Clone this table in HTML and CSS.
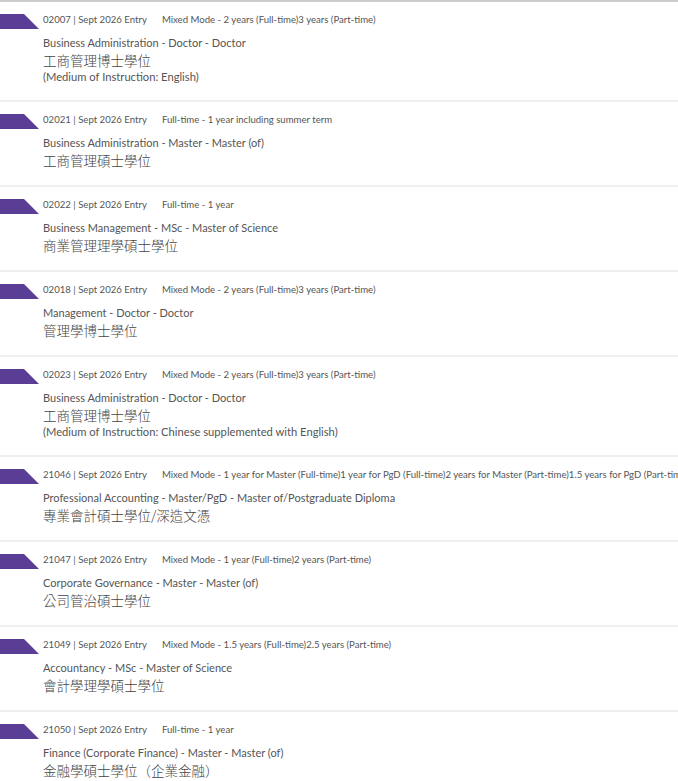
FILE: index.html
```html
<!DOCTYPE html>
<html lang="en">
<head>
  <meta charset="UTF-8" />
  <title>Programmes – Sept 2026 Entry</title>
  <link rel="stylesheet" href="styles.css">
</head>
<body>
  <ul class="programmes">
    <li class="programme">
      <div class="meta"><span class="tab"></span><span class="code">02007 | Sept 2026 Entry</span><span class="mode">Mixed Mode - 2 years (Full-time)3 years (Part-time)</span></div>
      <div class="name-en">Business Administration - Doctor - Doctor</div>
      <div class="name-zh">工商管理博士學位</div>
      <div class="note">(Medium of Instruction: English)</div>
    </li>
    <li class="programme">
      <div class="meta"><span class="tab"></span><span class="code">02021 | Sept 2026 Entry</span><span class="mode">Full-time - 1 year including summer term</span></div>
      <div class="name-en">Business Administration - Master - Master (of)</div>
      <div class="name-zh">工商管理碩士學位</div>
    </li>
    <li class="programme">
      <div class="meta"><span class="tab"></span><span class="code">02022 | Sept 2026 Entry</span><span class="mode">Full-time - 1 year</span></div>
      <div class="name-en">Business Management - MSc - Master of Science</div>
      <div class="name-zh">商業管理理學碩士學位</div>
    </li>
    <li class="programme">
      <div class="meta"><span class="tab"></span><span class="code">02018 | Sept 2026 Entry</span><span class="mode">Mixed Mode - 2 years (Full-time)3 years (Part-time)</span></div>
      <div class="name-en">Management - Doctor - Doctor</div>
      <div class="name-zh">管理學博士學位</div>
    </li>
    <li class="programme">
      <div class="meta"><span class="tab"></span><span class="code">02023 | Sept 2026 Entry</span><span class="mode">Mixed Mode - 2 years (Full-time)3 years (Part-time)</span></div>
      <div class="name-en">Business Administration - Doctor - Doctor</div>
      <div class="name-zh">工商管理博士學位</div>
      <div class="note">(Medium of Instruction: Chinese supplemented with English)</div>
    </li>
    <li class="programme">
      <div class="meta"><span class="tab"></span><span class="code">21046 | Sept 2026 Entry</span><span class="mode">Mixed Mode - 1 year for Master (Full-time)1 year for PgD (Full-time)2 years for Master (Part-time)1.5 years for PgD (Part-time)</span></div>
      <div class="name-en">Professional Accounting - Master/PgD - Master of/Postgraduate Diploma</div>
      <div class="name-zh">專業會計碩士學位/深造文憑</div>
    </li>
    <li class="programme">
      <div class="meta"><span class="tab"></span><span class="code">21047 | Sept 2026 Entry</span><span class="mode">Mixed Mode - 1 year (Full-time)2 years (Part-time)</span></div>
      <div class="name-en">Corporate Governance - Master - Master (of)</div>
      <div class="name-zh">公司管治碩士學位</div>
    </li>
    <li class="programme">
      <div class="meta"><span class="tab"></span><span class="code">21049 | Sept 2026 Entry</span><span class="mode">Mixed Mode - 1.5 years (Full-time)2.5 years (Part-time)</span></div>
      <div class="name-en">Accountancy - MSc - Master of Science</div>
      <div class="name-zh">會計學理學碩士學位</div>
    </li>
    <li class="programme">
      <div class="meta"><span class="tab"></span><span class="code">21050 | Sept 2026 Entry</span><span class="mode">Full-time - 1 year</span></div>
      <div class="name-en">Finance (Corporate Finance) - Master - Master (of)</div>
      <div class="name-zh">金融學碩士學位（企業金融）</div>
    </li>
  </ul>
</body>
</html>
```

FILE: styles.css
```css
html, body {
  margin: 0;
  padding: 0;
  overflow: hidden;
}
body {
  font-family: Lato, "Noto Sans CJK TC", sans-serif;
  background: #fff;
  color: #555;
}
.programmes {
  list-style: none;
  margin: 0;
  padding: 0;
  border-top: 2px solid #cccccc;
}
.programme {
  padding: 12px 0 16px;
  border-bottom: 2px solid #efefef;
}
.meta {
  display: flex;
  align-items: flex-start;
  height: 15px;
  font-size: 9.6px;
  line-height: 11px;
  white-space: nowrap;
}
.tab {
  flex: none;
  width: 39px;
  height: 15px;
  margin-right: 4px;
  background: #5a3e96;
  clip-path: polygon(0 0, 24px 0, 39px 100%, 0 100%);
}
.code {
  margin-right: 15px;
}
.name-en {
  margin-top: 6px;
  padding-left: 43px;
  font-size: 11px;
  line-height: 16px;
}
.name-zh {
  padding-left: 43px;
  font-family: "Noto Sans CJK TC", sans-serif;
  font-weight: 300;
  font-size: 13.5px;
  line-height: 18px;
  color: #444;
}
.note {
  padding-left: 43px;
  font-size: 11.2px;
  line-height: 15px;
}
```
